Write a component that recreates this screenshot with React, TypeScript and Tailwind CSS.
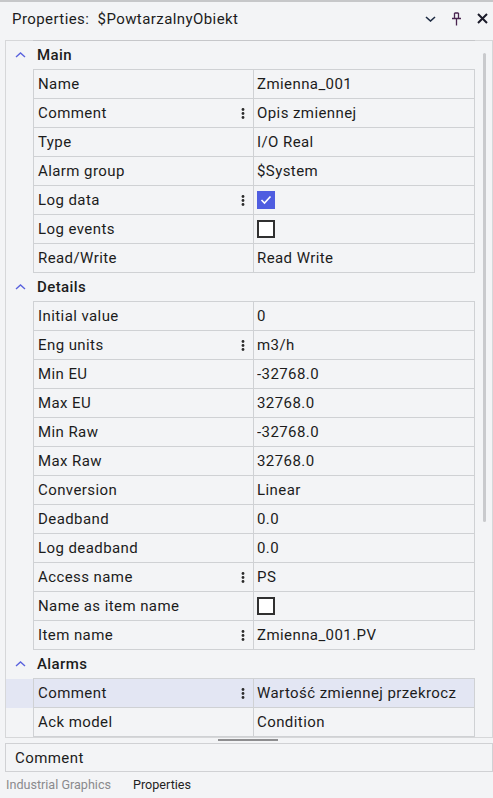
import React from "react";

type Row = {
  name: string;
  value?: string;
  check?: boolean;
  menu?: boolean;
  selected?: boolean;
};

type Group = { title: string; rows: Row[] };

const groups: Group[] = [
  {
    title: "Main",
    rows: [
      { name: "Name", value: "Zmienna_001" },
      { name: "Comment", value: "Opis zmiennej", menu: true },
      { name: "Type", value: "I/O Real" },
      { name: "Alarm group", value: "$System" },
      { name: "Log data", check: true, menu: true },
      { name: "Log events", check: false },
      { name: "Read/Write", value: "Read Write" },
    ],
  },
  {
    title: "Details",
    rows: [
      { name: "Initial value", value: "0" },
      { name: "Eng units", value: "m3/h", menu: true },
      { name: "Min EU", value: "-32768.0" },
      { name: "Max EU", value: "32768.0" },
      { name: "Min Raw", value: "-32768.0" },
      { name: "Max Raw", value: "32768.0" },
      { name: "Conversion", value: "Linear" },
      { name: "Deadband", value: "0.0" },
      { name: "Log deadband", value: "0.0" },
      { name: "Access name", value: "PS", menu: true },
      { name: "Name as item name", check: false },
      { name: "Item name", value: "Zmienna_001.PV", menu: true },
    ],
  },
  {
    title: "Alarms",
    rows: [
      { name: "Comment", value: "Wartość zmiennej przekrocz", menu: true, selected: true },
      { name: "Ack model", value: "Condition" },
    ],
  },
];

function Kebab() {
  return (
    <svg width="4" height="11" viewBox="0 0 4 11" className="shrink-0">
      <circle cx="2" cy="1.5" r="1.4" fill="#2b2b2b" />
      <circle cx="2" cy="5.5" r="1.4" fill="#2b2b2b" />
      <circle cx="2" cy="9.5" r="1.4" fill="#2b2b2b" />
    </svg>
  );
}

function CheckBox({ checked }: { checked: boolean }) {
  if (checked) {
    return (
      <div className="w-[18px] h-[18px] bg-[#4f5de0] flex items-center justify-center">
        <svg width="12" height="10" viewBox="0 0 12 10">
          <polyline points="1.5,5 4.5,8 10.5,1.5" fill="none" stroke="#fff" strokeWidth="1.6" />
        </svg>
      </div>
    );
  }
  return <div className="w-[18px] h-[18px] bg-white border-2 border-[#303030]" />;
}

function PropRow({ row }: { row: Row }) {
  return (
    <div className={`flex h-[29px] ${row.selected ? "bg-[#e3e6f3]" : ""}`}>
      <div className="w-[27px] shrink-0" />
      <div className="w-[220px] shrink-0 flex items-center justify-between pl-[4px] pr-[8px] border-l border-b border-[#cfd1d4]">
        <span className="whitespace-nowrap">{row.name}</span>
        {row.menu && <Kebab />}
      </div>
      <div className="w-[222px] shrink-0 flex items-center pl-[3px] border-l border-r border-b border-[#cfd1d4] overflow-hidden">
        {row.check === undefined ? (
          <span className="whitespace-nowrap overflow-hidden">{row.value}</span>
        ) : (
          <CheckBox checked={row.check} />
        )}
      </div>
    </div>
  );
}

export default function App() {
  return (
    <div
      className="w-[493px] h-[798px] bg-[#f3f4f6] text-[#1c1c1c] text-[15px] leading-[18px] tracking-[0.42px] flex flex-col overflow-hidden border-t-2 border-[#c6c7c9]"
      style={{ fontFamily: "Roboto, 'Noto Sans', sans-serif" }}
    >
      {/* title bar */}
      <div className="h-[38px] shrink-0 flex items-start pt-[8px] pl-[12px] pr-[5px]">
        <span className="whitespace-pre">Properties:  $PowtarzalnyObiekt</span>
        <div className="ml-auto flex items-start">
          <svg width="11" height="6" viewBox="0 0 11 6" className="mt-[6px]">
            <polyline points="1,1 5.5,5 10,1" fill="none" stroke="#1f2c44" strokeWidth="1.6" />
          </svg>
          <svg width="11" height="14" viewBox="0 0 11 14" className="ml-[15px] mt-[2px]">
            <path d="M3.5 1 H7.5 M3.5 1 V6.5 M7.5 1 V6.5 M1 6.5 H10 M5.5 6.5 V13.5" fill="none" stroke="#4a2450" strokeWidth="1.3" />
          </svg>
          <svg width="11" height="11" viewBox="0 0 11 11" className="ml-[15px] mt-[3px]">
            <path d="M1 1 L10 10 M10 1 L1 10" fill="none" stroke="#1b1b2a" strokeWidth="2" />
          </svg>
        </div>
      </div>

      {/* property grid */}
      <div className="ml-[5px] w-[488px] shrink-0 border-l border-r border-b border-[#d6d7d9]">
        <div className="flex h-[1px]">
          <div className="w-[27px] bg-[#d6d7d9]" />
          <div className="w-[442px] bg-[#c6c7ca]" />
          <div className="flex-1 bg-[#d6d7d9]" />
        </div>
        <div className="flex">
          <div className="w-[469px] shrink-0">
            {groups.map((g) => (
              <div key={g.title}>
                <div className="h-[28px] flex items-center">
                  <div className="w-[27px] flex justify-center pl-[2px]">
                    <svg width="11" height="6" viewBox="0 0 11 6">
                      <polyline points="1,5 5.5,1 10,5" fill="none" stroke="#5a62de" strokeWidth="1.4" />
                    </svg>
                  </div>
                  <span className="pl-[4px] font-medium">{g.title}</span>
                </div>
                <div className="ml-[27px] w-[442px] h-[1px] bg-[#cfd1d4]" />
                {g.rows.map((r, i) => (
                  <PropRow key={g.title + i} row={r} />
                ))}
              </div>
            ))}
          </div>
          <div className="flex-1 pl-[8px] pt-[12px]">
            <div className="w-[3px] h-[469px] rounded-full bg-[#c9cacd]" />
          </div>
        </div>
      </div>

      {/* splitter */}
      <div className="h-[5px] shrink-0 flex justify-center pt-[1px]">
        <div className="w-[60px] h-[2px] bg-[#8e8e90] ml-[3px]" />
      </div>

      {/* description */}
      <div className="ml-[5px] w-[488px] h-[29px] shrink-0 border border-[#d0d1d4] flex items-center pl-[9px]">
        Comment
      </div>

      {/* bottom tabs */}
      <div className="flex-1 flex items-center pl-[6px] text-[12.6px] tracking-normal pb-[1px]">
        <span className="text-[#8a8a8d]">Industrial Graphics</span>
        <span className="ml-[22px] text-[#1f1f1f]">Properties</span>
      </div>
    </div>
  );
}
